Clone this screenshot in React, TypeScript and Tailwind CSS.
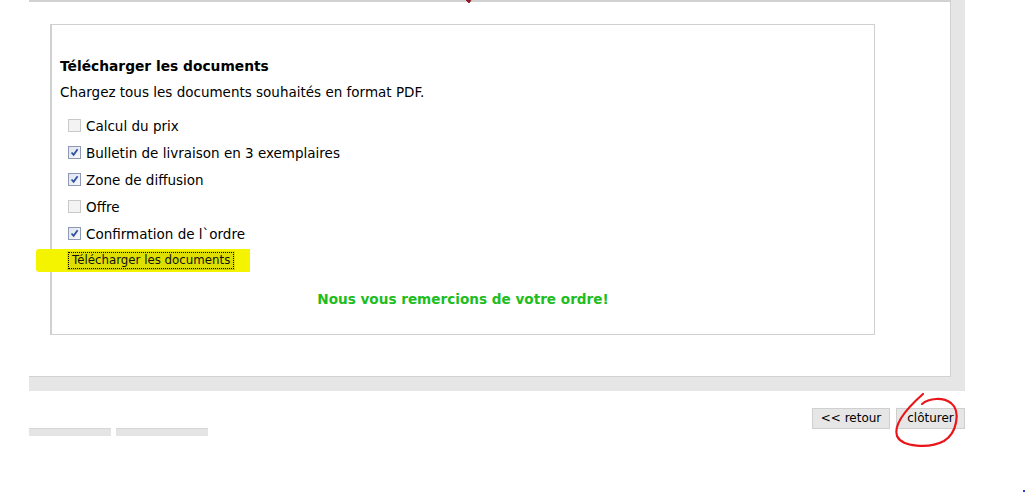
import React from "react";

type Doc = { label: string; checked: boolean; disabled?: boolean };

const docs: Doc[] = [
  { label: "Calcul du prix", checked: false, disabled: true },
  { label: "Bulletin de livraison en 3 exemplaires", checked: true },
  { label: "Zone de diffusion", checked: true },
  { label: "Offre", checked: false, disabled: true },
  { label: "Confirmation de l`ordre", checked: true },
];

function Box({ checked, disabled }: { checked: boolean; disabled?: boolean }) {
  if (!checked) {
    return (
      <span
        className={
          "block w-[13px] h-[13px] border " +
          (disabled ? "border-[#c9c9c9] bg-[#f3f3f3]" : "border-[#8a98b3] bg-white")
        }
      />
    );
  }
  return (
    <span className="flex items-center justify-center w-[13px] h-[13px] border border-[#8e9ab3] bg-gradient-to-br from-[#dfe4ee] to-[#f7f8fb]">
      <svg width="9" height="9" viewBox="0 0 9 9">
        <path d="M1.5 4.5 L3.6 6.8 L7.6 1.2" fill="none" stroke="#2f4fa6" strokeWidth="1.8" />
      </svg>
    </span>
  );
}

export default function App() {
  return (
    <div className="relative w-[1027px] h-[502px] overflow-hidden bg-white font-['DejaVu_Sans',Verdana,sans-serif] text-[13.5px] text-black">
      {/* panneau principal */}
      <div className="ml-[29px] w-[936px] bg-[#e6e6e6] pr-[14px] pb-[14px]">
        <div className="bg-white border-t-2 border-r border-b border-[#d2d2d2] px-[21px] pt-[22px] pb-[41px]">
          <div className="w-[825px] h-[311px] border border-l-2 border-[#d0d0d0] pl-[8px] pt-[33px]">
            <h2 className="font-bold text-[13.8px] leading-[16px]">Télécharger les documents</h2>
            <p className="mt-[10px] leading-[16px]">Chargez tous les documents souhaités en format PDF.</p>

            <div className="mt-[12px] flex flex-col">
              {docs.map((d) => (
                <label key={d.label} className="h-[27px] flex items-center gap-[5px] pl-[8px]">
                  <Box checked={d.checked} disabled={d.disabled} />
                  <span className="leading-[16px]">{d.label}</span>
                </label>
              ))}
            </div>

            {/* bouton surligné */}
            <div className="mt-[2px] -ml-[24px] w-[214px] h-[23px] bg-[#f4f400] rounded-l-[3px] flex items-center pl-[31px]">
              <button className="h-[19px] px-[1px] bg-[#dede00] border-b border-[#c4c400] flex items-center">
                <span className="border border-dotted border-black px-[3px] text-[11.8px] leading-[15px] text-[#111]">
                  Télécharger les documents
                </span>
              </button>
            </div>

            <p className="mt-[19px] text-center pr-[8px] font-bold text-[13.6px] text-[#20bd20] leading-[16px]">
              Nous vous remercions de votre ordre!
            </p>
          </div>
        </div>
      </div>

      {/* barre du bas */}
      <div className="flex w-[965px] justify-between">
        <div className="ml-[29px] mt-[37px] flex gap-[5px]">
          <span className="block w-[82px] h-[8px] bg-[#e4e4e4] border-t border-[#d6d6d6]" />
          <span className="block w-[92px] h-[8px] bg-[#e4e4e4] border-t border-[#d6d6d6]" />
        </div>
        <div className="mt-[17px] flex gap-[6px] text-[12px]">
          <button className="h-[21px] w-[78px] bg-[#e6e6e6] border border-[#cfcfcf] leading-[19px]">
            &lt;&lt; retour
          </button>
          <button className="h-[21px] w-[69px] bg-[#e6e6e6] border border-[#cfcfcf] leading-[19px]">
            clôturer
          </button>
        </div>
      </div>

      {/* annotations */}
      <svg className="absolute left-0 top-0 pointer-events-none" width="1027" height="502">
        <path d="M466 0 L469 3 L471 0" fill="#8b1a2a" stroke="#8b1a2a" strokeWidth="1" />
        <path
          d="M923 394 C 906 409, 893 424, 897 436 C 902 447, 929 449, 944 441 C 957 433, 961 411, 951 403 C 943 397, 929 398, 922 404"
          fill="none"
          stroke="#e8161b"
          strokeWidth="2.2"
          strokeLinecap="round"
        />
        <rect x="1023" y="490" width="2" height="2" fill="#2a3fd0" />
      </svg>
    </div>
  );
}
